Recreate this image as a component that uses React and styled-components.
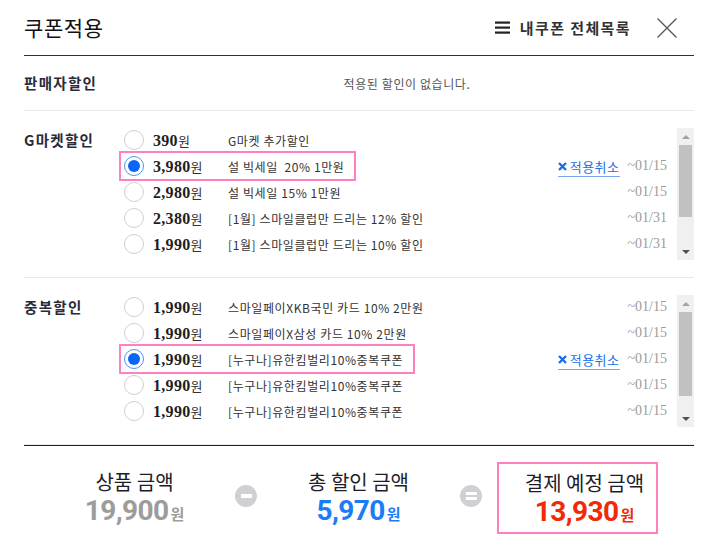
import React from "react";
import styled, { createGlobalStyle } from "styled-components";

const GlobalStyle = createGlobalStyle`
  body {
    margin: 0;
    background: #fff;
    font-family: "Noto Sans CJK KR", "Noto Sans", sans-serif;
    color: #222;
  }
`;

const Modal = styled.div`
  width: 708px;
  height: 547px;
  padding: 0 14px 0 24px;
  box-sizing: border-box;
  background: #fff;
`;

const Header = styled.div`
  height: 55px;
  display: flex;
  align-items: center;
  padding-right: 17px;
  border-bottom: 1px solid #333;
`;

const Title = styled.h1`
  margin: 0;
  font-size: 21px;
  font-weight: 400;
  line-height: 1;
  letter-spacing: 0.6px;
  color: #111;
`;

const MenuLink = styled.a`
  margin-left: auto;
  display: flex;
  align-items: center;
  gap: 10px;
  font-size: 15px;
  font-weight: 700;
  letter-spacing: 1.4px;
  color: #333;
  text-decoration: none;
`;

const CloseButton = styled.button`
  margin-left: 26px;
  width: 20px;
  height: 20px;
  padding: 0;
  border: 0;
  background: none;
  display: flex;
`;

const Section = styled.div`
  display: flex;
  align-items: ${({ $center }) => ($center ? "center" : "flex-start")};
  height: ${({ $center }) => ($center ? "54px" : "auto")};
  padding: ${({ $center }) => ($center ? "0" : "16px 0 17px")};
  border-bottom: 1px solid #e9e9e9;
`;

const Label = styled.div`
  width: 96px;
  flex-shrink: 0;
  font-size: 14.5px;
  font-weight: 700;
  line-height: 26px;
  letter-spacing: 1.3px;
  color: #2a2a3a;
`;

const Empty = styled.div`
  flex: 1;
  text-align: center;
  font-size: 12px;
  letter-spacing: 0.6px;
  color: #555;
`;

const ListArea = styled.div`
  flex: 1;
  display: flex;
`;

const Rows = styled.div`
  flex: 1;
  display: flex;
  flex-direction: column;
`;

const Row = styled.div`
  height: 26px;
  display: flex;
  align-items: center;
  padding-right: 10px;
`;

const Item = styled.label`
  display: flex;
  align-items: center;
  height: 26px;
  margin-left: 1px;
  padding: 0 10px 0 3px;
  outline: ${({ $selected }) => ($selected ? "2px solid #ff80c0" : "none")};
`;

const Radio = styled.span`
  width: 20px;
  height: 20px;
  box-sizing: border-box;
  border-radius: 50%;
  border: 1px solid ${({ $checked }) => ($checked ? "#4d94f5" : "#cfcfcf")};
  display: flex;
  align-items: center;
  justify-content: center;
  margin-right: 9px;
  background: #fff;

  &::after {
    content: "";
    width: 12px;
    height: 12px;
    border-radius: 50%;
    background: #0a66f5;
    display: ${({ $checked }) => ($checked ? "block" : "none")};
  }
`;

const Price = styled.span`
  width: 75px;
  font-family: "Liberation Serif", serif;
  font-weight: 700;
  font-size: 16px;
  letter-spacing: 0.3px;
  color: #1e1e1e;

  small {
    font-family: "Noto Sans CJK KR", sans-serif;
    font-weight: 400;
    font-size: 13px;
    letter-spacing: 0;
    color: #333;
  }
`;

const Desc = styled.span`
  font-size: 12px;
  letter-spacing: 0.6px;
  color: #333;
  white-space: pre;
`;

const Cancel = styled.a`
  margin-left: auto;
  display: flex;
  align-items: center;
  gap: 3px;
  font-size: 13px;
  letter-spacing: 0.5px;
  color: #1a6fe6;
  text-decoration: none;
  border-bottom: 1px solid #79a6ee;
  line-height: 18px;
  margin-top: 2px;
`;

const DateText = styled.span`
  margin-left: ${({ $auto }) => ($auto ? "auto" : "8px")};
  font-family: "Liberation Serif", serif;
  font-size: 14px;
  color: #9b9b9b;
`;

const Scrollbar = styled.div`
  width: 17px;
  height: 132px;
  margin-top: 1px;
  flex-shrink: 0;
  background: #f0f0f0;
  display: flex;
  flex-direction: column;
  align-items: center;
`;

const Arrow = styled.div`
  height: 17px;
  width: 100%;
  display: flex;
  align-items: center;
  justify-content: center;

  &::before {
    content: "";
    border-left: 4px solid transparent;
    border-right: 4px solid transparent;
    ${({ $down }) =>
      $down
        ? "border-top: 4px solid #505050;"
        : "border-bottom: 4px solid #a3a3a3;"}
  }
`;

const Thumb = styled.div`
  width: 13px;
  background: #c1c1c1;
`;

const Footer = styled.div`
  border-top: 1px solid #222;
  padding: 16px 0 0 10px;
  display: grid;
  grid-template-columns: 201px 22px 203px 22px 176px;
  align-items: center;
`;

const Total = styled.div`
  display: flex;
  flex-direction: column;
  align-items: center;
  padding-top: 2px;
`;

const FinalBox = styled(Total)`
  margin-left: 15px;
  height: 72px;
  box-sizing: border-box;
  border: 2px solid #ff80c0;
  padding: 6px 0 0 14px;
`;

const TotalLabel = styled.div`
  font-size: 20px;
  line-height: 26px;
  color: #1e1e2a;
  white-space: nowrap;
`;

const Amount = styled.div`
  font-family: Roboto, "Liberation Sans", sans-serif;
  font-weight: 700;
  font-size: 28px;
  letter-spacing: -0.6px;
  line-height: 32px;
  color: ${({ $color }) => $color};

  small {
    font-family: "Noto Sans CJK KR", sans-serif;
    font-size: 15px;
    letter-spacing: 0;
    margin-left: 2px;
  }
`;

const Operator = styled.div`
  width: 22px;
  height: 22px;
  border-radius: 50%;
  background: #cfcfd4;
  display: flex;
  flex-direction: column;
  align-items: center;
  justify-content: center;
  gap: 2px;
  margin-bottom: 5px;

  span {
    width: 11px;
    height: ${({ $bars }) => ($bars === 2 ? "3px" : "4px")};
    background: #fff;
  }
`;

const gmarket = [
  { price: "390", desc: "G마켓 추가할인" },
  { price: "3,980", desc: "설 빅세일  20% 1만원", date: "~01/15", selected: true },
  { price: "2,980", desc: "설 빅세일 15% 1만원", date: "~01/15" },
  { price: "2,380", desc: "[1월] 스마일클럽만 드리는 12% 할인", date: "~01/31" },
  { price: "1,990", desc: "[1월] 스마일클럽만 드리는 10% 할인", date: "~01/31" },
];

const duplicate = [
  { price: "1,990", desc: "스마일페이XKB국민 카드 10% 2만원", date: "~01/15" },
  { price: "1,990", desc: "스마일페이X삼성 카드 10% 2만원", date: "~01/15" },
  { price: "1,990", desc: "[누구나]유한킴벌리10%중복쿠폰", date: "~01/15", selected: true },
  { price: "1,990", desc: "[누구나]유한킴벌리10%중복쿠폰", date: "~01/15" },
  { price: "1,990", desc: "[누구나]유한킴벌리10%중복쿠폰", date: "~01/15" },
];

const CouponList = ({ items, thumb }) => (
  <ListArea>
    <Rows>
      {items.map((c, i) => (
        <Row key={i}>
          <Item $selected={c.selected}>
            <Radio $checked={c.selected} />
            <Price>
              {c.price}
              <small>원</small>
            </Price>
            <Desc>{c.desc}</Desc>
          </Item>
          {c.selected && (
            <Cancel href="#">
              <svg width="9" height="9" viewBox="0 0 9 9">
                <path d="M1 1L8 8M8 1L1 8" stroke="#1a6fe6" strokeWidth="2.4" />
              </svg>
              적용취소
            </Cancel>
          )}
          {c.date && <DateText $auto={!c.selected}>{c.date}</DateText>}
        </Row>
      ))}
    </Rows>
    <Scrollbar>
      <Arrow />
      <Thumb style={{ height: thumb }} />
      <div style={{ flex: 1 }} />
      <Arrow $down />
    </Scrollbar>
  </ListArea>
);

export default function App() {
  return (
    <Modal>
      <GlobalStyle />
      <Header>
        <Title>쿠폰적용</Title>
        <MenuLink href="#">
          <svg width="15" height="13" viewBox="0 0 15 13">
            <rect x="0" y="0.5" width="15" height="2.2" fill="#222" />
            <rect x="0" y="5.5" width="15" height="2.2" fill="#222" />
            <rect x="0" y="10.5" width="15" height="2.2" fill="#222" />
          </svg>
          내쿠폰 전체목록
        </MenuLink>
        <CloseButton aria-label="닫기">
          <svg width="20" height="20" viewBox="0 0 20 20">
            <path d="M0.5 0.5L19.5 19.5M19.5 0.5L0.5 19.5" stroke="#555" strokeWidth="1.3" />
          </svg>
        </CloseButton>
      </Header>

      <Section $center>
        <Label>판매자할인</Label>
        <Empty>적용된 할인이 없습니다.</Empty>
      </Section>

      <Section>
        <Label>G마켓할인</Label>
        <CouponList items={gmarket} thumb={72} />
      </Section>

      <Section>
        <Label>중복할인</Label>
        <CouponList items={duplicate} thumb={84} />
      </Section>

      <Footer>
        <Total>
          <TotalLabel>상품 금액</TotalLabel>
          <Amount $color="#9c9c9c">
            19,900<small>원</small>
          </Amount>
        </Total>
        <Operator>
          <span />
        </Operator>
        <Total>
          <TotalLabel>총 할인 금액</TotalLabel>
          <Amount $color="#1a7cf6">
            5,970<small>원</small>
          </Amount>
        </Total>
        <Operator $bars={2}>
          <span />
          <span />
        </Operator>
        <FinalBox>
          <TotalLabel>결제 예정 금액</TotalLabel>
          <Amount $color="#f02a08">
            13,930<small>원</small>
          </Amount>
        </FinalBox>
      </Footer>
    </Modal>
  );
}
